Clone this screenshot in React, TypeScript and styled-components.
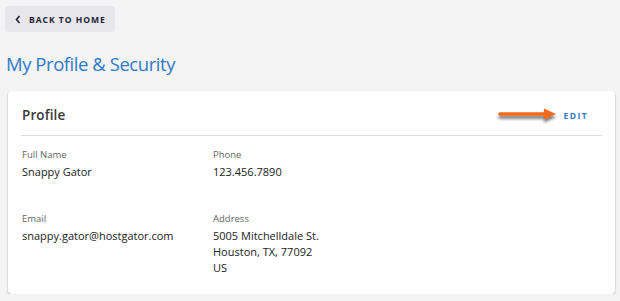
import React from "react";
import styled, { createGlobalStyle } from "styled-components";

const Global = createGlobalStyle`
  html, body { margin: 0; padding: 0; background: #f4f4f4; }
  body { font-family: "Open Sans", "Noto Sans", sans-serif; }
`;

const Page = styled.div`
  padding: 6px 5px 0 5px;
  display: flex;
  flex-direction: column;
  align-items: flex-start;
`;

const BackButton = styled.button`
  display: flex;
  align-items: center;
  gap: 8px;
  height: 26px;
  padding: 0 9px 0 10px;
  border: none;
  border-radius: 3px;
  background: #e7e7eb;
  color: #1e1d3a;
  font-family: "Open Sans", sans-serif;
  font-weight: 700;
  font-size: 8.5px;
  letter-spacing: 1px;
  cursor: pointer;
`;

const Title = styled.h1`
  margin: 19px 0 0 1px;
  font-size: 18.5px;
  font-weight: 400;
  color: #2f7bc9;
  letter-spacing: -0.45px;
  line-height: 26px;
`;

const Card = styled.section`
  align-self: stretch;
  margin: 14px 0 0 3px;
  background: #fff;
  border-radius: 4px;
  box-shadow: 0 1px 2px rgba(0, 0, 0, 0.35);
  padding: 0 13px 18px 13px;
`;

const CardHeader = styled.div`
  display: flex;
  align-items: center;
  justify-content: space-between;
  height: 40px;
  padding: 4px 14px 0 1px;
  border-bottom: 1px solid #dddddd;
`;

const CardTitle = styled.h2`
  margin: 0;
  font-size: 13.5px;
  font-weight: 600;
  color: #3a3a3a;
  letter-spacing: 0.1px;
`;

const EditWrap = styled.div`
  display: flex;
  align-items: center;
  gap: 6px;
`;

const EditButton = styled.button`
  border: none;
  background: none;
  padding: 0;
  color: #2f7bc9;
  font-family: "Open Sans", sans-serif;
  font-weight: 700;
  font-size: 8.5px;
  letter-spacing: 1.4px;
  cursor: pointer;
`;

const Grid = styled.div`
  display: grid;
  grid-template-columns: 191px 1fr;
  row-gap: 16px;
  padding: 12px 0 0 1px;
`;

const Field = styled.div`
  display: flex;
  flex-direction: column;
`;

const Label = styled.div`
  font-size: 9.5px;
  color: #666;
  line-height: 14px;
`;

const Value = styled.div`
  font-size: 11px;
  color: #222;
  line-height: 16px;
  margin-top: 2px;
  min-height: 32px;
`;

const Chevron = () => (
  <svg width="6" height="9" viewBox="0 0 6 9">
    <path d="M4.5 1 L1.5 4.5 L4.5 8" fill="none" stroke="#1e1d3a" strokeWidth="1.6" />
  </svg>
);

const Arrow = () => (
  <svg width="60" height="16" viewBox="0 0 60 16" style={{ overflow: "visible" }}>
    <defs>
      <filter id="sh" x="-20%" y="-80%" width="140%" height="260%">
        <feGaussianBlur in="SourceAlpha" stdDeviation="1.6" />
        <feOffset dx="0" dy="2.5" result="b" />
        <feComponentTransfer>
          <feFuncA type="linear" slope="0.55" />
        </feComponentTransfer>
        <feMerge>
          <feMergeNode />
          <feMergeNode in="SourceGraphic" />
        </feMerge>
      </filter>
    </defs>
    <g filter="url(#sh)">
      <line x1="2" y1="7" x2="48" y2="7" stroke="#f26a1b" strokeWidth="3.6" strokeLinecap="round" />
      <path d="M46 1.5 L58 7 L46 12.5 Z" fill="#f26a1b" />
    </g>
  </svg>
);

export default function App() {
  return (
    <>
      <Global />
      <Page>
        <BackButton>
          <Chevron />
          BACK TO HOME
        </BackButton>
        <Title>My Profile &amp; Security</Title>
        <Card>
          <CardHeader>
            <CardTitle>Profile</CardTitle>
            <EditWrap>
              <Arrow />
              <EditButton>EDIT</EditButton>
            </EditWrap>
          </CardHeader>
          <Grid>
            <Field>
              <Label>Full Name</Label>
              <Value>Snappy Gator</Value>
            </Field>
            <Field>
              <Label>Phone</Label>
              <Value>123.456.7890</Value>
            </Field>
            <Field>
              <Label>Email</Label>
              <Value>snappy.gator@hostgator.com</Value>
            </Field>
            <Field>
              <Label>Address</Label>
              <Value>
                5005 Mitchelldale St.
                <br />
                Houston, TX, 77092
                <br />
                US
              </Value>
            </Field>
          </Grid>
        </Card>
      </Page>
    </>
  );
}
